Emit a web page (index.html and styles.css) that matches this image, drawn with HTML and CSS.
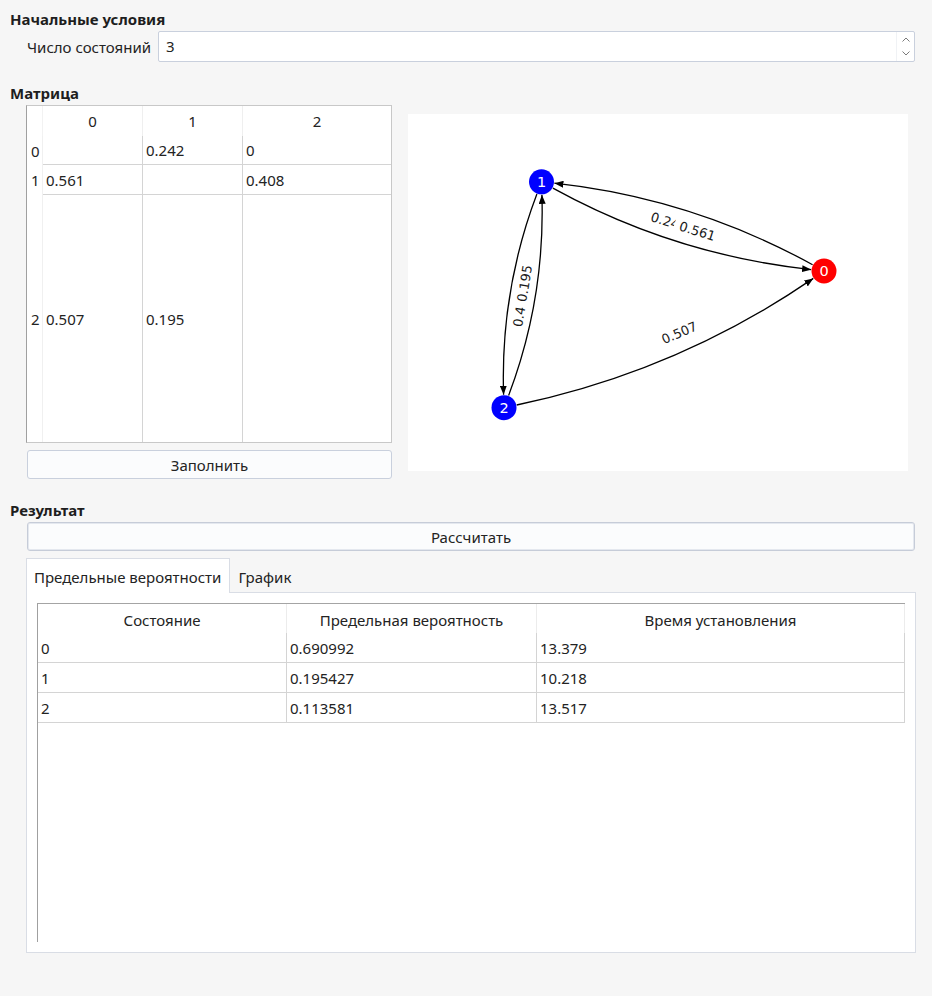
FILE: index.html
```html
<!DOCTYPE html>
<html lang="ru">
<head>
<meta charset="utf-8">
<title>Марковская цепь</title>
<link rel="stylesheet" href="styles.css">
</head>
<body>
<div class="app">
  <h2 class="group-title">Начальные условия</h2>
  <div class="field-row">
    <label class="field-label">Число состояний</label>
    <div class="spin">
      <span class="spin-value">3</span>
      <div class="spin-buttons">
        <span class="spin-arrow"><svg width="8" height="5" viewBox="0 0 8 5"><polyline points="0.5,4.5 4,1 7.5,4.5" fill="none" stroke="#7a7a7a" stroke-width="1"/></svg></span>
        <span class="spin-arrow"><svg width="8" height="5" viewBox="0 0 8 5"><polyline points="0.5,0.5 4,4 7.5,0.5" fill="none" stroke="#7a7a7a" stroke-width="1"/></svg></span>
      </div>
    </div>
  </div>

  <h2 class="group-title spaced">Матрица</h2>
  <div class="matrix-row">
    <div class="matrix-col">
      <div class="matrix-table">
        <div class="mh corner"></div>
        <div class="mh">0</div>
        <div class="mh">1</div>
        <div class="mh last">2</div>

        <div class="rh">0</div>
        <div class="mc"></div>
        <div class="mc">0.242</div>
        <div class="mc last">0</div>

        <div class="rh">1</div>
        <div class="mc">0.561</div>
        <div class="mc"></div>
        <div class="mc last">0.408</div>

        <div class="rh">2</div>
        <div class="mc bottom">0.507</div>
        <div class="mc bottom">0.195</div>
        <div class="mc bottom last"></div>
      </div>
      <button class="btn fill-btn">Заполнить</button>
    </div>
    <div class="graph">
      <svg width="500" height="357" viewBox="0 0 500 357">
        <defs>
          <marker id="ah" markerUnits="userSpaceOnUse" markerWidth="9" markerHeight="7" refX="9" refY="3.5" orient="auto">
            <path d="M0,0 L9,3.5 L0,7 z" fill="#000"/>
          </marker>
        </defs>
        <g transform="translate(-408 -113)">
          <g fill="none" stroke="#000" stroke-width="1.3" marker-end="url(#ah)">
            <path d="M552.9,187.1 Q673.8,253.7 811.1,268.6"/>
            <path d="M812.6,263.7 Q691.7,197.2 554.4,182.2"/>
            <path d="M536.9,193 Q500.2,290 503.6,393.7"/>
            <path d="M508.6,394.5 Q545.3,297.5 541.9,193.8"/>
            <path d="M516.7,404 Q677.7,370.4 813.3,277.4"/>
          </g>
          <circle cx="824" cy="270" r="12.5" fill="#ff0000"/>
          <circle cx="541.5" cy="180.8" r="12.5" fill="#0000ff"/>
          <circle cx="504" cy="406.7" r="12.5" fill="#0000ff"/>
          <g class="node-label">
            <text x="824" y="275.2">0</text>
            <text x="541.5" y="186">1</text>
            <text x="504" y="411.9">2</text>
          </g>
          <g class="edge-label">
            <g transform="translate(669 221) rotate(17.5)"><rect x="-24" y="-9" width="48" height="18" rx="3"/><text y="4.6">0.242</text></g>
            <g transform="translate(697.4 230.1) rotate(17.5)"><rect x="-24" y="-9" width="48" height="18" rx="3"/><text y="4.6">0.561</text></g>
            <g transform="translate(520.4 307.5) rotate(-80.6)"><rect x="-24" y="-9" width="48" height="18" rx="3"/><text y="4.6">0.408</text></g>
            <g transform="translate(524.6 282.5) rotate(-80.6)"><rect x="-24" y="-9" width="48" height="18" rx="3"/><text y="4.6">0.195</text></g>
            <g transform="translate(679.3 331.8) rotate(-23.1)"><rect x="-24" y="-9" width="48" height="18" rx="3"/><text y="4.6">0.507</text></g>
          </g>
        </g>
      </svg>
    </div>
  </div>

  <h2 class="group-title spaced-2">Результат</h2>
  <div class="result">
    <button class="btn calc-btn">Рассчитать</button>
    <div class="tabs">
      <div class="tab active">Предельные вероятности</div>
      <div class="tab">График</div>
    </div>
    <div class="pane">
      <div class="table-view">
        <div class="rt-grid">
          <div class="th">Состояние</div>
          <div class="th">Предельная вероятность</div>
          <div class="th">Время установления</div>

          <div class="td">0</div>
          <div class="td">0.690992</div>
          <div class="td">13.379</div>

          <div class="td">1</div>
          <div class="td">0.195427</div>
          <div class="td">10.218</div>

          <div class="td">2</div>
          <div class="td">0.113581</div>
          <div class="td">13.517</div>
        </div>
      </div>
    </div>
  </div>
</div>
</body>
</html>
```

FILE: styles.css
```css
* {
  box-sizing: border-box;
}

html,
body {
  margin: 0;
  padding: 0;
}

body {
  width: 932px;
  height: 996px;
  overflow: hidden;
  background: #f6f6f6;
  font-family: "Noto Sans", "Open Sans", sans-serif;
  font-size: 15px;
  color: #232323;
}

.app {
  padding: 9px 16px 0 10px;
}

.group-title {
  margin: 0;
  font-size: 15px;
  font-weight: 700;
  line-height: 20px;
  color: #1e1e1e;
}

.group-title.spaced {
  margin-top: 21px;
}

.group-title.spaced-2 {
  margin-top: 21px;
}

/* ---------- spin box row ---------- */
.field-row {
  display: flex;
  align-items: center;
  gap: 7px;
  margin: 2px 1px 0 17px;
}

.field-label {
  white-space: nowrap;
}

.spin {
  flex: 1;
  height: 31px;
  display: flex;
  background: #fff;
  border: 1px solid #c9d0dd;
  border-radius: 2px;
}

.spin-value {
  flex: 1;
  padding-left: 7px;
  line-height: 29px;
}

.spin-buttons {
  width: 18px;
  display: flex;
  flex-direction: column;
  justify-content: center;
  border-left: 1px solid #f0f2f5;
}

.spin-arrow {
  height: 15px;
  display: flex;
  align-items: center;
  justify-content: center;
}

/* ---------- matrix ---------- */
.matrix-row {
  display: flex;
  align-items: center;
  margin: 2px 0 0 16px;
}

.matrix-col {
  width: 366px;
  display: flex;
  flex-direction: column;
}

.matrix-table {
  display: grid;
  grid-template-columns: 16px 100px 100px 148px;
  grid-template-rows: 30px 29px 30px 247px;
  background: #fff;
  border: 1px solid #c8c8c8;
  border-left-color: #a0a0a0;
}

.mh {
  display: flex;
  align-items: center;
  justify-content: center;
  border-right: 1px solid #efefef;
}

.mh.corner {
  border-right-color: #f2f2f2;
}

.mh.last {
  border-right: none;
}

.rh {
  display: flex;
  align-items: center;
  padding-left: 4px;
  border-right: 1px solid #f0f0f0;
}

.mc {
  display: flex;
  align-items: center;
  padding-left: 3px;
  border-right: 1px solid #d4d4d4;
  border-bottom: 1px solid #d4d4d4;
}

.mc.last {
  border-right: none;
}

.mc.bottom {
  border-bottom: none;
}

.btn {
  font: inherit;
  color: inherit;
  background: #fbfcfd;
  border: 1px solid #c9d0dd;
  border-radius: 3px;
  padding: 0;
}

.fill-btn {
  height: 29px;
  margin: 7px 0 0 1px;
}

.graph {
  width: 500px;
  height: 357px;
  margin-left: 16px;
  background: #fff;
}

.graph svg {
  display: block;
}

.node-label text {
  font-family: "DejaVu Sans", sans-serif;
  font-size: 14.5px;
  fill: #fff;
  text-anchor: middle;
}

.edge-label rect {
  fill: #fff;
}

.edge-label text {
  font-family: "DejaVu Sans", sans-serif;
  font-size: 13px;
  fill: #1a1a1a;
  text-anchor: middle;
}

/* ---------- result ---------- */
.result {
  margin: 2px 0 0 16px;
}

.calc-btn {
  display: block;
  width: calc(100% - 2px);
  height: 29px;
  margin-left: 1px;
  border-color: #c6ccd8;
  box-shadow: inset 0 0 0 1px #e4e8ef;
}

.tabs {
  display: flex;
  align-items: flex-end;
  margin-top: 7px;
}

.tab {
  height: 34px;
  display: flex;
  align-items: center;
  padding: 3px 8px 0 8px;
}

.tab.active {
  position: relative;
  z-index: 1;
  height: 35px;
  margin-bottom: -1px;
  padding-left: 7px;
  padding-bottom: 1px;
  background: #fff;
  border: 1px solid #d9dde5;
  border-bottom: none;
}

.pane {
  height: 361px;
  padding: 10px;
  background: #fff;
  border: 1px solid #d9dde5;
}

.table-view {
  height: 100%;
  border-top: 1px solid #a4a4a4;
  border-left: 1px solid #a0a0a0;
}

.rt-grid {
  display: grid;
  grid-template-columns: 249px 250px 368px;
  grid-template-rows: 29px;
  grid-auto-rows: 30px;
}

.th {
  display: flex;
  align-items: center;
  justify-content: center;
  padding-top: 2px;
  border-right: 1px solid #ececec;
}

.td {
  display: flex;
  align-items: center;
  padding-left: 3px;
  border-right: 1px solid #d4d4d4;
  border-bottom: 1px solid #d4d4d4;
}
```
